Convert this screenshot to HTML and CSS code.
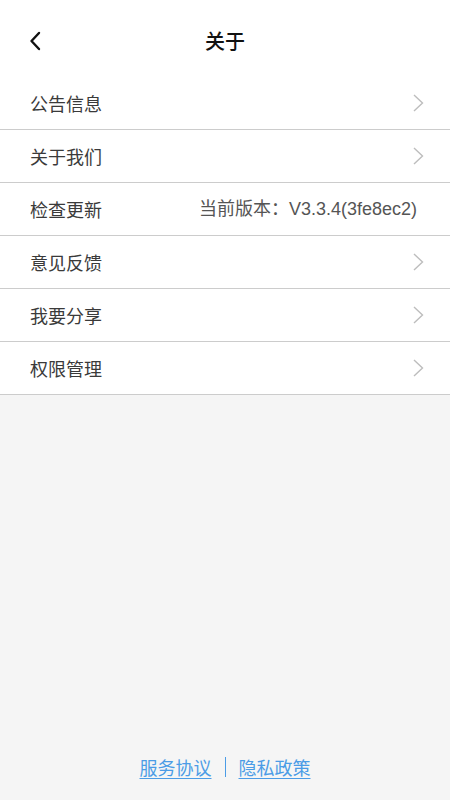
FILE: index.html
```html
<!DOCTYPE html>
<html lang="zh">
<head>
<meta charset="utf-8">
<link rel="stylesheet" href="styles.css">
</head>
<body>
<div class="page">
  <header class="nav">
    <span class="back">
      <svg width="12" height="20" viewBox="0 0 12 20"><path d="M10 2 L2.5 10 L10 18" fill="none" stroke="#111" stroke-width="2.4" stroke-linecap="round" stroke-linejoin="round"/></svg>
    </span>
    <h1 class="title">关于</h1>
  </header>
  <ul class="list">
    <li class="row"><span class="label">公告信息</span><span class="chev"><svg width="11" height="18" viewBox="0 0 11 18"><path d="M1 1 L9.5 9 L1 17" fill="none" stroke="#bdbdbd" stroke-width="1.4"/></svg></span></li>
    <li class="row"><span class="label">关于我们</span><span class="chev"><svg width="11" height="18" viewBox="0 0 11 18"><path d="M1 1 L9.5 9 L1 17" fill="none" stroke="#bdbdbd" stroke-width="1.4"/></svg></span></li>
    <li class="row"><span class="label">检查更新</span><span class="value">当前版本：V3.3.4(3fe8ec2)</span></li>
    <li class="row"><span class="label">意见反馈</span><span class="chev"><svg width="11" height="18" viewBox="0 0 11 18"><path d="M1 1 L9.5 9 L1 17" fill="none" stroke="#bdbdbd" stroke-width="1.4"/></svg></span></li>
    <li class="row"><span class="label">我要分享</span><span class="chev"><svg width="11" height="18" viewBox="0 0 11 18"><path d="M1 1 L9.5 9 L1 17" fill="none" stroke="#bdbdbd" stroke-width="1.4"/></svg></span></li>
    <li class="row"><span class="label">权限管理</span><span class="chev"><svg width="11" height="18" viewBox="0 0 11 18"><path d="M1 1 L9.5 9 L1 17" fill="none" stroke="#bdbdbd" stroke-width="1.4"/></svg></span></li>
  </ul>
  <div class="spacer"></div>
  <footer class="footer">
    <a class="link">服务协议</a>
    <span class="sep"></span>
    <a class="link">隐私政策</a>
  </footer>
</div>
</body>
</html>
```
FILE: styles.css
```css
* { box-sizing: border-box; }
html, body { margin: 0; padding: 0; }
body {
  font-family: "Noto Sans CJK SC", "Noto Sans", sans-serif;
  background: #f5f5f5;
}
.page {
  width: 450px;
  height: 800px;
  display: flex;
  flex-direction: column;
  background: #f5f5f5;
}
.nav {
  height: 77px;
  background: #fff;
  display: flex;
  align-items: center;
  justify-content: center;
  position: relative;
}
.back {
  position: absolute;
  left: 29px;
  top: 31px;
  width: 12px;
  height: 20px;
  display: flex;
}
.title {
  margin: 0;
  font-size: 20px;
  font-weight: 500;
  color: #111;
  line-height: 1;
  margin-top: 4px;
}
.list {
  list-style: none;
  margin: 0;
  padding: 0;
  background: #fff;
}
.row {
  height: 53px;
  border-bottom: 1px solid #cccccc;
  display: flex;
  align-items: center;
  justify-content: space-between;
  padding: 0 26px 0 30px;
}
.label {
  font-size: 18px;
  color: #3a3a3a;
  line-height: 1;
}
.value {
  font-family: "Liberation Sans", "Noto Sans CJK SC", sans-serif;
  font-size: 18px;
  color: #555;
  line-height: 1;
  margin-right: 7px;
}
.chev {
  display: flex;
  width: 11px;
  height: 18px;
}
.spacer { flex: 1; }
.footer {
  height: 45px;
  display: flex;
  justify-content: center;
  align-items: flex-start;
  gap: 13px;
}
.link {
  font-size: 18px;
  line-height: 24px;
  color: #4b9ce6;
  text-decoration: underline;
  text-underline-offset: 3px;
}
.sep {
  width: 1px;
  height: 20px;
  margin-top: 2px;
  background: #4b9ce6;
}
```
